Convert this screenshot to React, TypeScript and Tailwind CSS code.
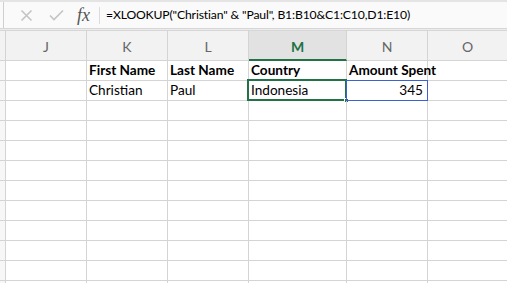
import React from 'react';

const font = { fontFamily: 'Lato, "Open Sans", sans-serif' };

const cols = [
  { key: 'J', w: 'w-[81px]' },
  { key: 'K', w: 'w-[81px]' },
  { key: 'L', w: 'w-[81px]' },
  { key: 'M', w: 'w-[98px]' },
  { key: 'N', w: 'w-[81px]' },
];

const rows: string[][] = [
  ['', 'First Name', 'Last Name', 'Country', 'Amount Spent'],
  ['', 'Christian', 'Paul', 'Indonesia', '345'],
  [], [], [], [], [], [], [], [], [], [],
];

const FormulaBar: React.FC = () => (
  <div className="flex h-[29px] border-t-[2px] border-[#e4e4e4] bg-[#fafafa] border-b border-b-[#d6d6d6]">
    <div className="w-[4px] border-r border-[#cfcfcf]" />
    <div className="flex items-center pl-[16px] gap-[16px] text-[#c4c4c4]">
      <svg width="13" height="13" viewBox="0 0 13 13" fill="none" stroke="currentColor" strokeWidth="1.6">
        <path d="M1.5 1.5l10 10M11.5 1.5l-10 10" />
      </svg>
      <svg width="15" height="12" viewBox="0 0 15 12" fill="none" stroke="currentColor" strokeWidth="1.6">
        <path d="M1 6.5l4 4L14 1.5" />
      </svg>
    </div>
    <div className="flex items-center ml-[13px] h-full">
      <span className="text-[18px] italic text-[#555] leading-none" style={{ fontFamily: '"Liberation Serif", serif' }}>
        fx
      </span>
      <div className="w-px h-[17px] bg-[#dcdcdc] ml-[9px]" />
      <span className="ml-[6px] text-[12.2px] tracking-[-0.15px] text-black whitespace-nowrap pt-[1px]" style={font}>
        =XLOOKUP("Christian" &amp; "Paul", B1:B10&amp;C1:C10,D1:E10)
      </span>
    </div>
  </div>
);

const App: React.FC = () => {
  return (
    <div className="w-[507px] h-[283px] overflow-hidden bg-white" style={font}>
      <FormulaBar />
      <div className="h-[2px] bg-[#ececec] border-b border-[#d6d6d6]" />
      {/* column headers */}
      <div className="flex h-[30px] bg-[#f2f2f2] border-b border-[#d4d4d4]">
        <div className="w-[6px] border-r border-[#d4d4d4]" />
        {cols.map((c) => (
          <div
            key={c.key}
            className={`${c.w} shrink-0 flex items-center justify-center pt-[2px] border-r border-[#d4d4d4] text-[14px] ${
              c.key === 'M' ? 'bg-[#e2e2e2] text-[#217346] font-bold border-b-2 border-b-[#217346] mb-[-1px]' : 'text-[#666]'
            }`}
          >
            {c.key}
          </div>
        ))}
        <div className="flex-1 flex items-center justify-center pt-[2px] text-[14px] text-[#666]">O</div>
      </div>
      {/* grid */}
      {rows.map((r, ri) => (
        <div key={ri} className="flex h-[20px] border-b border-[#d4d4d4]">
          <div className="w-[6px] border-r border-[#d4d4d4] bg-[#f7f7f7]" />
          {cols.map((c, ci) => {
            const v = r[ci] ?? '';
            const isSel = ri === 1 && c.key === 'M';
            const isBlue = ri === 1 && c.key === 'N';
            return (
              <div
                key={c.key}
                className={`${c.w} shrink-0 relative flex items-center px-[2px] text-[13.6px] text-black leading-none whitespace-nowrap border-r border-[#d4d4d4] ${
                  ri === 0 ? 'font-bold' : ''
                } ${c.key === 'N' && ri === 1 ? 'justify-end pr-[4px]' : ''}`}
              >
                {v}
                {isSel && (
                  <>
                    <div className="absolute left-[-2px] top-[-2px] right-[-1px] bottom-[-1px] border-2 border-[#217346]" />
                    <div className="absolute right-[-3px] bottom-[-3px] w-[5px] h-[5px] bg-[#217346] border border-white" />
                  </>
                )}
                {isBlue && <div className="absolute left-[-1px] top-[-1px] right-[-1px] bottom-[-1px] border border-[#3a63d0]" />}
              </div>
            );
          })}
          <div className="flex-1" />
        </div>
      ))}
    </div>
  );
};

export default App;
